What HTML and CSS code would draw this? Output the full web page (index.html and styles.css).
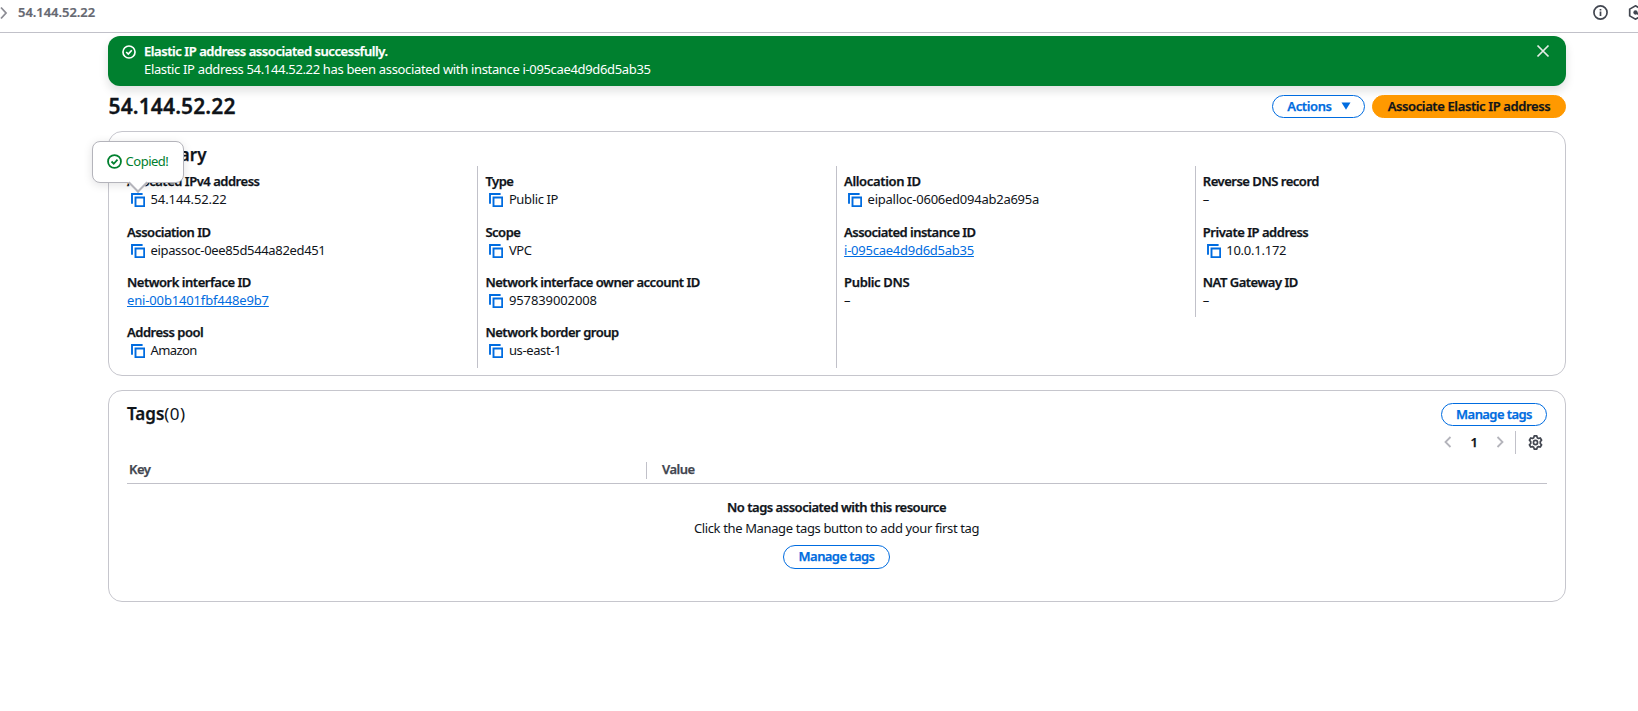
FILE: index.html
```
<!DOCTYPE html>
<html lang="en">
<head>
<meta charset="utf-8">
<title>54.144.52.22</title>
<link rel="stylesheet" href="styles.css">
</head>
<body>
<svg class="defs" aria-hidden="true">
  <symbol id="copy" viewBox="0 0 14 14"><path d="M1 10.700V1h10.600M4.500 4.500h8.700v8.700H4.500z" fill="none" stroke="currentColor" stroke-width="1.900"/></symbol>
  <symbol id="ok" viewBox="0 0 16 16"><circle cx="8" cy="8" r="6.900" fill="none" stroke="currentColor" stroke-width="1.900"/><path d="M4.800 8l2.400 2.400 4-4.400" fill="none" stroke="currentColor" stroke-width="1.900"/></symbol>
</svg>
<header class="topbar">
  <svg class="crumb-arrow" viewBox="0 0 8 14"><path d="M1 1.500 6 7l-5 5.500" fill="none" stroke="currentColor" stroke-width="1.800"/></svg>
  <span class="crumb">54.144.52.22</span>
  <svg class="top-icon" viewBox="0 0 16 16"><g fill="none" stroke="currentColor" stroke-width="1.800"><circle cx="8" cy="8" r="7"/><path d="M8 7v4.700M8 4.200v1.700"/></g></svg>
  <svg class="top-icon" viewBox="0 0 16 16"><g fill="none" stroke="currentColor" stroke-width="1.800"><path d="M8 .9 14.200 4.400v7.200L8 15.100 1.800 11.600V4.400z"/><path d="M8 8l5 3"/></g><circle cx="8" cy="8" r="2.300" fill="currentColor"/></svg>
</header>
<main class="page">
  <section class="flash">
    <svg class="flash-icon"><use href="#ok"/></svg>
    <div class="flash-text"><b>Elastic IP address associated successfully.</b><span>Elastic IP address 54.144.52.22 has been associated with instance i-095cae4d9d6d5ab35</span></div>
    <svg class="close" viewBox="0 0 14 14"><path d="M1.500 1.500l11 11M12.500 1.500l-11 11" fill="none" stroke="currentColor" stroke-width="1.700"/></svg>
  </section>
  <div class="title-row">
    <h1>54.144.52.22</h1>
    <button class="btn actions">Actions<svg class="caret" viewBox="0 0 10 8"><path d="M.5.5h9L5 7.800z" fill="currentColor"/></svg></button>
    <button class="btn primary">Associate Elastic IP address</button>
  </div>
  <section class="card summary">
    <h2>Summary</h2>
    <div class="cols">
      <div class="col">
        <dl><dt>Allocated IPv4 address</dt><dd><span class="copy-wrap"><svg class="copy"><use href="#copy"/></svg><span class="tip"><svg class="tip-icon"><use href="#ok"/></svg>Copied!</span></span><span class="num">54.144.52.22</span></dd></dl>
        <dl><dt>Association ID</dt><dd><svg class="copy"><use href="#copy"/></svg><span class="long">eipassoc-0ee85d544a82ed451</span></dd></dl>
        <dl><dt>Network interface ID</dt><dd><a class="eni">eni-00b1401fbf448e9b7</a></dd></dl>
        <dl><dt>Address pool</dt><dd><svg class="copy"><use href="#copy"/></svg><span class="tight">Amazon</span></dd></dl>
      </div>
      <div class="col">
        <dl><dt>Type</dt><dd><svg class="copy"><use href="#copy"/></svg>Public IP</dd></dl>
        <dl><dt>Scope</dt><dd><svg class="copy"><use href="#copy"/></svg>VPC</dd></dl>
        <dl><dt>Network interface owner account ID</dt><dd><svg class="copy"><use href="#copy"/></svg><span class="num">957839002008</span></dd></dl>
        <dl><dt>Network border group</dt><dd><svg class="copy"><use href="#copy"/></svg>us-east-1</dd></dl>
      </div>
      <div class="col">
        <dl><dt class="wide">Allocation ID</dt><dd><svg class="copy"><use href="#copy"/></svg><span class="id">eipalloc-0606ed094ab2a695a</span></dd></dl>
        <dl><dt class="instance">Associated instance ID</dt><dd><a class="id">i-095cae4d9d6d5ab35</a></dd></dl>
        <dl><dt class="wide">Public DNS</dt><dd>–</dd></dl>
      </div>
      <div class="col short">
        <dl><dt>Reverse DNS record</dt><dd>–</dd></dl>
        <dl><dt>Private IP address</dt><dd><svg class="copy"><use href="#copy"/></svg><span class="id">10.0.1.172</span></dd></dl>
        <dl><dt>NAT Gateway ID</dt><dd>–</dd></dl>
      </div>
    </div>
  </section>
  <section class="card tags">
    <div class="tags-head"><h2>Tags<span class="count">(0)</span></h2><button class="btn manage">Manage tags</button></div>
    <div class="pager">
      <svg class="chev" viewBox="0 0 8 12"><path d="M6.500 1 1.500 6l5 5" fill="none" stroke="currentColor" stroke-width="1.800"/></svg>
      <b class="page-no">1</b>
      <svg class="chev" viewBox="0 0 8 12"><path d="M1.500 1l5 5-5 5" fill="none" stroke="currentColor" stroke-width="1.800"/></svg>
      <span class="rule"></span>
      <svg class="gear" viewBox="0 0 16 16"><g fill="none" stroke="currentColor" stroke-width="1.800" stroke-linejoin="round"><path d="M6.600 1h2.800l.5 1.900 1.300.75 1.900-.5 1.400 2.400L13.100 7v2l1.400 1.450-1.400 2.400-1.900-.5-1.300.75L9.400 15H6.600l-.5-1.900-1.300-.75-1.900.5-1.400-2.400L2.900 9V7L1.500 5.550l1.400-2.400 1.900.5 1.300-.75z"/><circle cx="8" cy="8" r="2.200"/></g></svg>
    </div>
    <div class="thead"><span class="th key">Key</span><span class="th val">Value</span></div>
    <div class="empty"><b>No tags associated with this resource</b><span>Click the Manage tags button to add your first tag</span><button class="btn manage">Manage tags</button></div>
  </section>
</main>
</body>
</html>
```
FILE: styles.css
```
* { box-sizing: border-box; }
body { margin: 0; background: #fff; color: #0f141a; font: 13px/18px "Noto Sans", "Open Sans", sans-serif; letter-spacing: -.37px; }
h1, h2, dl, dd, p { margin: 0; }
.defs { position: absolute; width: 0; height: 0; }
.topbar { display: flex; align-items: center; height: 33px; padding-bottom: 8px; border-bottom: 1px solid #c1c1c9; overflow: hidden; }
.crumb-arrow { width: 8px; height: 14px; flex: none; color: #8c8c94; margin: 1px 10px 0 0; }
.crumb { flex: none; width: 1574.500px; font-weight: 600; color: #656871; letter-spacing: -.05px; -webkit-text-stroke: .2px currentColor; }
.top-icon { flex: none; width: 15px; height: 15px; margin: 1px 20px 0 0; color: #424650; }
.page { width: 1458px; margin: 3px 0 0 108px; }
.flash { display: flex; height: 50px; padding: 6px 16px 0 14px; border-radius: 12px; background: #00802f; color: #fff; box-shadow: 0 5px 10px rgba(15, 20, 26, .13); }
.flash-icon { width: 14px; height: 14px; margin: 3px 8px 0 0; }
.flash-text { flex: 1; display: flex; flex-direction: column; align-items: flex-start; letter-spacing: -.34px; }
b, dt, .thead { font-weight: 600; letter-spacing: -.48px; -webkit-text-stroke: .25px currentColor; }
.flash-text b { letter-spacing: -.44px; }
.close { width: 14px; height: 14px; margin-top: 2px; color: #e6ece8; }
.title-row { display: flex; align-items: center; height: 23px; margin: 9px 0 13px; gap: 7px; }
h1 { flex: 1; padding-left: .5px; font-size: 21px; line-height: 23px; font-weight: 600; letter-spacing: .13px; -webkit-text-stroke: .3px currentColor; }
.btn { display: flex; align-items: center; justify-content: center; height: 23px; width: 106px; padding: 0 0 1px; border: 1.500px solid #006ce0; border-radius: 12px; background: #fff; color: #006ce0; font: 600 13px/18px "Noto Sans", "Open Sans", sans-serif; letter-spacing: -.38px; white-space: nowrap; -webkit-text-stroke: .25px currentColor; }
.manage { letter-spacing: -.58px; }
.actions { width: 93px; gap: 9px; padding-left: 1px; }
.caret { width: 10px; height: 8px; }
.primary { width: 194px; background: #f90; border-color: #f90; color: #0f141a; }
.card { border: 1px solid #c6c6cd; border-radius: 14px; }
.summary { height: 245px; padding: 14px 18px 0; }
h2 { font-size: 17px; line-height: 20px; font-weight: 600; letter-spacing: 0; -webkit-text-stroke: .25px currentColor; }
.summary h2 { height: 20px; line-height: 18px; }
.cols { display: flex; align-items: flex-start; }
.col { flex: none; width: 358.700px; height: 202px; padding-top: 6px; }
.col + .col { border-left: 1px solid #c1c1c9; padding-left: 7.200px; margin-left: -8.500px; width: 367.200px; }
.col.short { height: 151px; }
dl { height: 50px; }
dl:first-child { height: 51px; }
.wide { letter-spacing: -.35px; }
.instance { letter-spacing: -.53px; }
.long { letter-spacing: -.34px; }
.eni { letter-spacing: -.15px; }
.id { letter-spacing: -.25px; }
.num { letter-spacing: -.1px; }
.tight { letter-spacing: -.6px; }
dd { display: flex; align-items: center; }
.copy { width: 14px; height: 14px; margin: 2px 5.500px 0 4px; flex: none; color: #006ce0; display: block; }
.copy-wrap { position: relative; display: block; }
a { color: #006ce0; text-decoration: underline; }
.tip { position: absolute; left: -35px; top: -50px; width: 92px; height: 42px; display: flex; align-items: center; justify-content: center; gap: 4px; padding: 0 1px 2px 0; background: #fff; border: 1.500px solid #b4b4bb; border-radius: 8px; color: #00802f; letter-spacing: -.5px; box-shadow: 0 2px 10px rgba(15, 20, 26, .12); }
.tip::after { content: ""; position: absolute; left: 38px; top: 34px; width: 12px; height: 12px; background: #fff; border: solid #b4b4bb; border-width: 0 2px 2px 0; transform: rotate(45deg); }
.tip-icon { width: 15px; height: 15px; margin-top: 1px; }
.tags { height: 212px; margin-top: 14px; padding: 12px 18px 0; }
.tags-head { display: flex; justify-content: space-between; }
.tags-head h2 { line-height: 22px; }
.count { font-weight: 400; letter-spacing: .4px; -webkit-text-stroke: 0; }
.pager { display: flex; align-items: center; height: 23px; margin-top: 5px; padding-right: 4px; justify-content: flex-end; color: #424650; }
.chev { width: 8px; height: 12px; margin-bottom: 1px; color: #b4b4bb; }
.page-no { width: 44px; padding-bottom: 2px; text-align: center; color: #0f141a; }
.rule { width: 1px; height: 23px; margin: 0 12px 0 11px; background: #c1c1c9; }
.gear { width: 15px; height: 15px; margin-bottom: 1px; }
.thead { display: flex; height: 30px; padding-top: 8px; border-bottom: 1px solid #c1c1c9; color: #424650; }
.th { height: 17px; line-height: 15px; }
.key { width: 520px; padding-left: 2px; border-right: 1px solid #c1c1c9; }
.val { padding-left: 15px; }
.empty { display: flex; flex-direction: column; align-items: center; padding: 14px 1px 0 0; }
.empty > b, .empty > span { height: 21px; line-height: 18px; }
.empty .btn { margin-top: 5px; height: 24px; width: 107px; padding-bottom: 2px; }
```
